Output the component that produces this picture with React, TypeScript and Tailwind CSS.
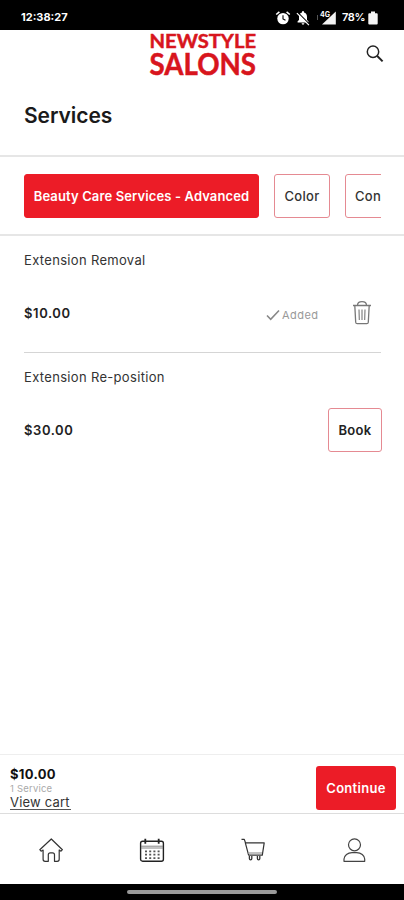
import type { ReactNode } from 'react';

const categories = [
  { label: 'Beauty Care Services - Advanced', className: 'w-[235px] bg-[#ec1c27] border-[#ec1c27] text-white font-semibold tracking-[0.12px]' },
  { label: 'Color', className: 'w-[56px] border-[#e58a92] text-[#333] font-medium tracking-[0.3px]' },
  { label: 'Con', className: 'w-[80px] justify-start! pl-[9px] border-[#e58a92] text-[#333] font-medium tracking-[0.3px]' },
];

function StatusBar() {
  return (
    <div className="flex h-[30px] shrink-0 items-center bg-black pt-[5px] pl-[21px] text-white">
      <span className="w-[254px] text-[11px] font-bold">12:38:27</span>
      <svg width="16" height="16" viewBox="0 0 16 16" fill="none">
        <circle cx="8" cy="8.6" r="5.7" fill="#fff" />
        <path d="M1.2 4.5L4.4 1.8M14.8 4.5L11.6 1.8" stroke="#fff" strokeWidth="1.6" />
        <path d="M8 5.3v3.6l2.5 1.4" stroke="#000" strokeWidth="1.1" />
      </svg>
      <svg className="ml-[5px]" width="14" height="16" viewBox="0 0 14 16">
        <path d="M1.6 12.5V11.3L3 9.9V7c0-2.3 1.1-3.9 3-4.4V2a1 1 0 012 0v.6c1.9.5 3 2.1 3 4.4v2.9l1.4 1.4v1.2zM5.6 13.3h2.8a1.4 1.4 0 01-2.8 0z" fill="#fff" />
        <path d="M1.8 2.4l11.6 11.8" stroke="#000" strokeWidth="1.1" />
        <path d="M.9 3.2l12 12" stroke="#fff" strokeWidth="1.2" />
      </svg>
      <svg className="ml-[5px] overflow-visible" width="22" height="16" viewBox="0 0 22 16">
        <path d="M20.8 1.5v13H7z" fill="#f2f2f2" />
        <path d="M2.5 5v5" stroke="#555" strokeWidth="1" />
        <text x="5" y="7.4" fontSize="7" fontWeight="700" fill="#fff" stroke="#000" strokeWidth="1.2" paintOrder="stroke">4G</text>
      </svg>
      <span className="ml-[5px] w-[26px] text-[11px] font-semibold tracking-[-0.4px] whitespace-nowrap">78%</span>
      <svg width="10" height="14" viewBox="0 0 10 14" fill="#f5f5f5">
        <path d="M3 .5h4v1.7h1.7a1 1 0 011 1v9.3a1 1 0 01-1 1H1.3a1 1 0 01-1-1V3.2a1 1 0 011-1H3z" />
      </svg>
    </div>
  );
}

function Header() {
  return (
    <header className="flex h-[48px] shrink-0 items-start">
      <svg className="ml-[148px] overflow-visible" width="110" height="47" viewBox="0 0 110 47" fill="#d8151d" stroke="#d8151d" strokeWidth=".5" fontFamily="Lato, sans-serif" fontWeight="700">
        <text x="1.5" y="17.6" fontSize="19.5" textLength="106.5" lengthAdjust="spacingAndGlyphs">NEWSTYLE</text>
        <text x="1.5" y="44.8" fontSize="30" textLength="106.5" lengthAdjust="spacingAndGlyphs">SALONS</text>
      </svg>
      <svg className="mt-[14px] ml-[107px]" width="20" height="20" viewBox="0 0 20 20" fill="none" stroke="#222">
        <circle cx="8" cy="7.8" r="5.7" strokeWidth="1.5" />
        <path d="M12 11.8l5.6 5.6" strokeWidth="2" />
      </svg>
    </header>
  );
}

function ServiceRow({ name, price, children }: { name: string; price: string; children: ReactNode }) {
  return (
    <div className="mx-6 h-[117px] pt-[15px]">
      <h3 className="text-[13px] leading-[18px] tracking-[0.32px] text-[#333]">{name}</h3>
      <div className="mt-[22px] flex h-[44px] w-[358px] items-center justify-between">
        <span className="pt-[2px] text-[13px] font-semibold tracking-[0.6px] text-[#222]">{price}</span>
        {children}
      </div>
    </div>
  );
}

function CartBar() {
  return (
    <div className="flex h-[59px] shrink-0 items-start justify-between border-t border-[#eee] pr-2 pl-[10px]">
      <div className="pt-[11px]">
        <p className="text-[13px] leading-[17px] font-bold tracking-[0.3px] text-[#111]">$10.00</p>
        <p className="text-[9.5px] leading-[11px] tracking-[0.2px] text-[#aaa]">1 Service</p>
        <p className="h-[16px] w-[61px] border-b border-[#555] text-[13px] leading-[17px] tracking-[0.2px] whitespace-nowrap text-[#333]">View cart</p>
      </div>
      <button className="mt-[11px] h-[44px] w-[80px] rounded-[3px] bg-[#ec1c27] pt-px text-[13px] font-semibold tracking-[0.3px] text-white">Continue</button>
    </div>
  );
}

function TabBar() {
  return (
    <nav className="grid h-[71px] shrink-0 grid-cols-4 border-t border-[#ddd] pt-[23px]">
      <svg className="mx-auto" width="26" height="26" viewBox="0 0 26 26" fill="none" stroke="#333" strokeWidth="1.2">
        <path d="M13.3 2L24.4 12.7l-1.4 1.5-1.8-1.2v9.3a2 2 0 01-2 2h-2.7v-6.5a2 2 0 00-2-2h-2.2a2 2 0 00-2 2v6.5H7.1a2 2 0 01-2-2V13l-2 1.2-1.3-1.5z" strokeLinejoin="round" />
      </svg>
      <svg className="mx-auto" width="26" height="26" viewBox="0 0 26 26" fill="none" stroke="#222">
        <rect x="1.6" y="4.2" width="22.8" height="20" rx="2" strokeWidth="1.4" />
        <path d="M6.3 1.7v5M19.7 1.7v5" strokeWidth="1.8" />
        <path d="M2 9.2h22M2 11h22" stroke="#777" strokeWidth=".9" />
        <path d="M6 14.3h15M6 17.7h15M6 21.2h15" strokeWidth="1.7" strokeDasharray="2 2.2" stroke="#555" />
      </svg>
      <svg className="mx-auto" width="26" height="26" viewBox="0 0 26 26" fill="none" stroke="#333" strokeWidth="1.2">
        <path d="M1.5 2.4h2.8l1.2 3.4h18.7l-1.9 12.4H8.6L5.2 5.3" strokeLinejoin="round" />
        <path d="M8 16h14" stroke="#999" />
        <path d="M9.4 19v2.6a1.2 1.2 0 002.4 0V19M17.4 19v2.6a1.2 1.2 0 002.4 0V19" strokeWidth="1.3" />
      </svg>
      <svg className="mx-auto" width="26" height="26" viewBox="0 0 26 26" fill="none" stroke="#444" strokeWidth="1.2">
        <circle cx="13.5" cy="7.8" r="6" />
        <path d="M3 24.3v-2.2c0-3.8 4-6.5 8-6.5h4.7c4.2 0 8 2.7 8 6.5v2.2z" strokeLinejoin="round" />
      </svg>
    </nav>
  );
}

export default function App() {
  return (
    <div className="flex h-[900px] w-[404px] flex-col overflow-hidden bg-white font-['Inter',sans-serif]">
      <StatusBar />
      <Header />
      <h1 className="flex h-[77px] shrink-0 items-center pb-[2px] pl-[24px] text-[21px] font-semibold tracking-[-0.05px] text-[#1a1a1a]">Services</h1>
      <div className="h-[81px] shrink-0 border-y-2 border-[#e6e6e6] px-6 pt-[17px]">
        <div className="flex w-[357px] gap-[15px] overflow-hidden">
          {categories.map((c) => (
            <button key={c.label} className={`flex h-[44px] shrink-0 items-center justify-center rounded-[3px] border pt-px text-[13px] whitespace-nowrap ${c.className}`}>
              {c.label}
            </button>
          ))}
        </div>
      </div>
      <main className="flex-1">
        <ServiceRow name="Extension Removal" price="$10.00">
          <div className="flex items-center pr-[10px] text-[#999]">
            <svg className="mt-[4px]" width="14" height="12" viewBox="0 0 14 12" fill="none" stroke="#888" strokeWidth="1.6">
              <path d="M1 6.5l3.7 3.8L13 1.5" />
            </svg>
            <span className="mt-[5px] ml-[2px] w-[70px] text-[11px] tracking-[0.45px]">Added</span>
            <svg width="20" height="26" viewBox="0 0 20 26" fill="none" stroke="#777" strokeWidth="1.3">
              <path d="M1 5.5h18M2.8 5.5l.9 16.7a1.6 1.6 0 001.6 1.5h9.4a1.6 1.6 0 001.6-1.5l.9-16.7M5.5 5.3C5.5.5 14.5.5 14.5 5.3" />
              <path d="M7 9.5l.3 10.5M10 9.5V20M13 9.5l-.3 10.5" strokeWidth="1.1" />
            </svg>
          </div>
        </ServiceRow>
        <div className="-mt-[1px] mr-[23px] ml-6 border-t border-[#d5d5d5]" />
        <ServiceRow name="Extension Re-position" price="$30.00">
          <button className="h-[44px] w-[54px] rounded-[3px] border border-[#e58a92] pt-[2px] text-[13px] font-semibold tracking-[0.3px] text-[#222]">Book</button>
        </ServiceRow>
      </main>
      <CartBar />
      <TabBar />
      <div className="flex h-[16px] shrink-0 items-center justify-center bg-black">
        <div className="h-[4px] w-[150px] rounded-full bg-[#999]" />
      </div>
    </div>
  );
}
